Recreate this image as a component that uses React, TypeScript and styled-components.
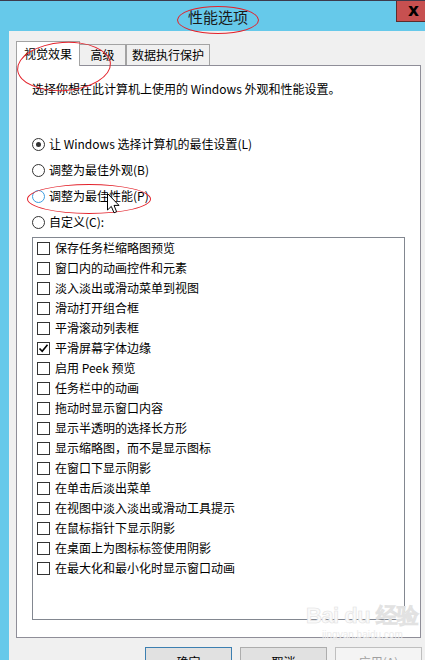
import React from "react";
import styled, { createGlobalStyle } from "styled-components";

const GlobalStyle = createGlobalStyle`
  html, body {
    margin: 0;
    padding: 0;
    background: #f0f0f0;
  }
  body {
    font-family: "Noto Sans CJK SC", "Noto Sans", sans-serif;
    font-size: 12px;
    color: #000;
  }
`;

const Window = styled.div`
  position: relative;
  width: 425px;
  height: 660px;
  overflow: hidden;
  box-sizing: border-box;
  background: #66c9ea;
  border-top: 1px solid #3d3a4c;
  display: flex;
  flex-direction: column;
`;

const TitleBar = styled.div`
  height: 30px;
  flex-shrink: 0;
  display: grid;
  grid-template-columns: 1fr auto 1fr;
  align-items: start;
`;

const Title = styled.div`
  grid-column: 2;
  padding-left: 11px;
  line-height: 32px;
  font-size: 15px;
  color: #1a1a1a;
`;

const CloseButton = styled.div`
  grid-column: 3;
  justify-self: end;
  width: 29px;
  height: 21px;
  box-sizing: border-box;
  padding-left: 5px;
  padding-bottom: 2px;
  background: #c75050;
  border: 1px solid #5c2d2d;
  border-top: none;
  border-right: none;
  display: flex;
  align-items: center;
  justify-content: center;
  font-family: "DejaVu Sans", sans-serif;
  font-weight: bold;
  font-size: 17px;
  line-height: 1;
  color: #000;
`;

const Body = styled.div`
  flex: 1;
  margin-left: 9px;
  background: #f0f0f0;
  padding: 10px 3px 0 7px;
  display: flex;
  flex-direction: column;
`;

const TabRow = styled.div`
  height: 24px;
  display: flex;
  align-items: flex-start;
`;

const Tab = styled.div<{ $active?: boolean; $w: number }>`
  position: relative;
  box-sizing: border-box;
  width: ${(p) => p.$w}px;
  height: ${(p) => (p.$active ? 25 : 21)}px;
  margin-top: ${(p) => (p.$active ? 0 : 3)}px;
  margin-left: ${(p) => (p.$w === 47 ? -1 : 0)}px;
  z-index: ${(p) => (p.$active ? 2 : 1)};
  background: ${(p) => (p.$active ? "#fff" : "#f0f0f0")};
  border: 1px solid #a3a3a3;
  border-bottom: none;
  display: flex;
  align-items: center;
  justify-content: center;
  line-height: 16px;
  padding-bottom: ${(p) => (p.$active ? 1 : 0)}px;
`;

const Panel = styled.div`
  width: 405px;
  height: 573px;
  box-sizing: border-box;
  background: #fff;
  border: 1px solid #8f8e98;
  padding: 15px 15px 17px 15px;
  display: flex;
  flex-direction: column;
  flex-shrink: 0;
`;

const Description = styled.div`
  line-height: 16px;
`;

const RadioGroup = styled.div`
  margin-top: 34px;
  display: flex;
  flex-direction: column;
`;

const RadioRow = styled.div`
  height: 26px;
  display: flex;
  align-items: center;
  gap: 4px;
  line-height: 16px;
`;

const RadioCircle = styled.span<{ $checked?: boolean; $hover?: boolean }>`
  width: 13px;
  height: 13px;
  box-sizing: border-box;
  border-radius: 50%;
  border: 1px solid ${(p) => (p.$hover ? "#3c9de0" : "#333")};
  background: #fff;
  display: flex;
  align-items: center;
  justify-content: center;
  flex-shrink: 0;

  &::after {
    content: "";
    display: ${(p) => (p.$checked ? "block" : "none")};
    width: 5px;
    height: 5px;
    border-radius: 50%;
    background: #333;
  }
`;

const ListBox = styled.div`
  margin-top: 2px;
  flex: 1;
  border: 1px solid #828790;
  padding-left: 4px;
  display: flex;
  flex-direction: column;
`;

const CheckRow = styled.div`
  height: 20px;
  display: flex;
  align-items: center;
  gap: 5px;
  line-height: 16px;
`;

const CheckBox = styled.span`
  width: 13px;
  height: 13px;
  box-sizing: border-box;
  border: 1px solid #333;
  background: #fff;
  display: flex;
  align-items: center;
  justify-content: center;
  flex-shrink: 0;
`;

const ButtonRow = styled.div`
  margin-top: 9px;
  display: flex;
  justify-content: flex-end;
  gap: 8px;
`;

const Button = styled.div<{ $default?: boolean; $disabled?: boolean }>`
  width: 87px;
  height: 26px;
  box-sizing: border-box;
  flex-shrink: 0;
  border: 1px solid
    ${(p) => (p.$default ? "#3c7fb1" : p.$disabled ? "#bfbfbf" : "#adadad")};
  background: ${(p) => (p.$disabled ? "#f4f4f4" : "#e1e1e1")};
  color: ${(p) => (p.$disabled ? "#a0a0a0" : "#000")};
  display: flex;
  align-items: center;
  justify-content: center;
  padding-top: 4px;
  line-height: 16px;
`;

const Ellipse = styled.div<{ $x: number; $y: number; $w: number; $h: number; $r?: number }>`
  position: absolute;
  left: ${(p) => p.$x}px;
  top: ${(p) => p.$y}px;
  width: ${(p) => p.$w}px;
  height: ${(p) => p.$h}px;
  box-sizing: border-box;
  border: 1px solid #e3222b;
  border-radius: 50%;
  transform: rotate(${(p) => p.$r ?? 0}deg);
  pointer-events: none;
  z-index: 5;
`;

const Cursor = styled.svg`
  position: absolute;
  left: 107px;
  top: 192px;
  z-index: 6;
`;

const Watermark = styled.div`
  position: absolute;
  left: 306px;
  top: 602px;
  z-index: 4;
  display: flex;
  flex-direction: column;
  align-items: center;
  color: #fafafa;
  -webkit-text-stroke: 0.6px #e2e2e2;
  pointer-events: none;
`;

const MarkMain = styled.div`
  font-family: "Liberation Sans", sans-serif;
  font-weight: bold;
  font-size: 22px;
  line-height: 26px;
  letter-spacing: -0.5px;
`;

const MarkSub = styled.div`
  font-family: "Liberation Sans", sans-serif;
  font-size: 10px;
  line-height: 12px;
  color: #ebebeb;
  -webkit-text-stroke: 0;
`;

const effects = [
  "保存任务栏缩略图预览",
  "窗口内的动画控件和元素",
  "淡入淡出或滑动菜单到视图",
  "滑动打开组合框",
  "平滑滚动列表框",
  "平滑屏幕字体边缘",
  "启用 Peek 预览",
  "任务栏中的动画",
  "拖动时显示窗口内容",
  "显示半透明的选择长方形",
  "显示缩略图，而不是显示图标",
  "在窗口下显示阴影",
  "在单击后淡出菜单",
  "在视图中淡入淡出或滑动工具提示",
  "在鼠标指针下显示阴影",
  "在桌面上为图标标签使用阴影",
  "在最大化和最小化时显示窗口动画",
];

const options = [
  { label: "让 Windows 选择计算机的最佳设置(L)", checked: true },
  { label: "调整为最佳外观(B)" },
  { label: "调整为最佳性能(P)", hover: true },
  { label: "自定义(C):" },
];

export default function App() {
  return (
    <>
      <GlobalStyle />
      <Window>
        <TitleBar>
          <Title>性能选项</Title>
          <CloseButton>x</CloseButton>
        </TitleBar>
        <Body>
          <TabRow>
            <Tab $active $w={64}>视觉效果</Tab>
            <Tab $w={47}>高级</Tab>
            <Tab $w={84}>数据执行保护</Tab>
          </TabRow>
          <Panel>
            <Description>选择你想在此计算机上使用的 Windows 外观和性能设置。</Description>
            <RadioGroup>
              {options.map((o) => (
                <RadioRow key={o.label}>
                  <RadioCircle $checked={o.checked} $hover={o.hover} />
                  {o.label}
                </RadioRow>
              ))}
            </RadioGroup>
            <ListBox>
              {effects.map((e, i) => (
                <CheckRow key={e}>
                  <CheckBox>
                    {i === 5 && (
                      <svg width="11" height="11" viewBox="0 0 11 11">
                        <path d="M1.5 5.5 L4.2 8.3 L9.5 1.8" fill="none" stroke="#000" strokeWidth="1.6" />
                      </svg>
                    )}
                  </CheckBox>
                  {e}
                </CheckRow>
              ))}
            </ListBox>
          </Panel>
          <ButtonRow>
            <Button $default>确定</Button>
            <Button>取消</Button>
            <Button $disabled>应用(A)</Button>
          </ButtonRow>
        </Body>

        <Ellipse $x={177} $y={5} $w={82} $h={28} />
        <Ellipse $x={17} $y={41} $w={94} $h={49} $r={-4} />
        <Ellipse $x={27} $y={183} $w={124} $h={30} />

        <Cursor width="14" height="22" viewBox="0 0 14 22">
          <path
            d="M0.5 0.5 L0.5 17 L4.3 13.4 L7 19.8 L9.6 18.7 L7 12.4 L12 12.4 Z"
            fill="#fff"
            stroke="#000"
            strokeWidth="1"
            strokeLinejoin="round"
          />
        </Cursor>

        <Watermark>
          <MarkMain>Bai du 经验</MarkMain>
          <MarkSub>jingyan.baidu.com</MarkSub>
        </Watermark>
      </Window>
    </>
  );
}
